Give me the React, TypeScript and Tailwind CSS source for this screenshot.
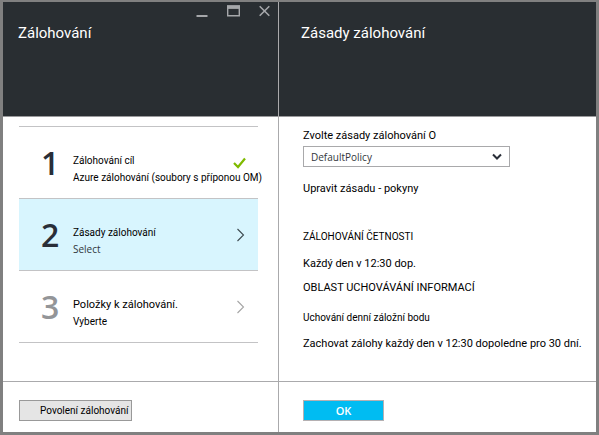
import type { ReactNode } from "react";

type StepProps = {
  number: string;
  title: string;
  detail: string;
  titleClass: string;
  detailClass: string;
  numberClass: string;
  active?: boolean;
  icon: ReactNode;
};

function Step({ number, title, detail, titleClass, detailClass, numberClass, active, icon }: StepProps) {
  return (
    <li className="border-b border-[#c3c3c5]">
      <button
        type="button"
        className={`flex h-[71px] w-full items-center pr-3 pl-[22px] text-left ${active ? "bg-[#d8f5fe]" : "bg-white"}`}
      >
        <span className={`w-8 shrink-0 font-['Open_Sans',sans-serif] text-[32px] leading-9 font-semibold ${numberClass}`}>
          {number}
        </span>
        <span className="flex w-0 flex-1 flex-col pt-[13px] whitespace-nowrap">
          <span className={`leading-[17px] ${titleClass}`}>{title}</span>
          <span className={`leading-[17px] ${detailClass}`}>{detail}</span>
        </span>
        <span className="shrink-0">{icon}</span>
      </button>
    </li>
  );
}

function Chevron({ className }: { className: string }) {
  return (
    <svg width="11" height="14" viewBox="0 0 11 14" fill="none" className={className} aria-hidden="true">
      <path d="M2.5 1L8.5 7L2.5 13" stroke="currentColor" strokeWidth="1.1" />
    </svg>
  );
}

export default function App() {
  return (
    <main className="grid min-h-screen grid-cols-[276fr_317fr] border-t-2 border-r-3 border-b-3 border-l-3 border-[#808080] bg-white font-['Roboto',sans-serif] text-black">
      <section className="flex min-w-0 flex-col border-r border-[#aaaaac]">
        <header className="flex h-[115px] flex-col border-b border-[#9a9a9c] bg-[#292e32] text-[#a5a7aa]">
          <div className="flex h-[18px] items-center justify-end gap-[19px] pr-2">
            <button type="button" aria-label="Minimalizovat">
              <svg width="12" height="12" viewBox="0 0 12 12" className="block">
                <path d="M0.5 11H11.5" stroke="currentColor" strokeWidth="2" />
              </svg>
            </button>
            <button type="button" aria-label="Maximalizovat">
              <svg width="13" height="12" viewBox="0 0 13 12" className="block" fill="none">
                <path d="M0.7 1H12.3V10.8H0.7Z" stroke="currentColor" strokeWidth="1.4" />
                <path d="M0 2.2H13" stroke="currentColor" strokeWidth="3.4" />
              </svg>
            </button>
            <button type="button" aria-label="Zavřít">
              <svg width="11" height="12" viewBox="0 0 11 12" className="block">
                <path d="M0.7 1.2L10.3 10.8M10.3 1.2L0.7 10.8" stroke="currentColor" strokeWidth="1.6" />
              </svg>
            </button>
          </div>
          <h1 className="pl-[15px] text-[15px] leading-[26px] text-white">Zálohování</h1>
        </header>

        <div className="flex flex-1 flex-col pt-[9px] pr-5 pl-4">
          <ol className="border-t border-[#c3c3c5]">
            <Step
              number="1"
              title="Zálohování cíl"
              detail="Azure zálohování (soubory s příponou OM)"
              titleClass="text-[10px]"
              detailClass="text-[10px]"
              numberClass="text-[#292e38]"
              icon={
                <svg width="13" height="12" viewBox="0 0 13 12" fill="none" className="text-[#7fba00]" aria-hidden="true">
                  <path d="M1 6L5 10L12 1.5" stroke="currentColor" strokeWidth="2.2" />
                </svg>
              }
            />
            <Step
              number="2"
              title="Zásady zálohování"
              detail="Select"
              titleClass="text-[10px]"
              detailClass="font-['Open_Sans',sans-serif] text-[10px] text-[#32373c]"
              numberClass="text-[#292e38]"
              active
              icon={<Chevron className="text-[#3d4a50]" />}
            />
            <Step
              number="3"
              title="Položky k zálohování."
              detail="Vyberte"
              titleClass="text-[11px]"
              detailClass="text-[10px]"
              numberClass="text-[#939598]"
              icon={<Chevron className="text-[#a5a5a5]" />}
            />
          </ol>
        </div>

        <footer className="h-[51px] border-t border-[#aaaaac] pt-[18px] pl-4">
          <button
            type="button"
            className="block h-[21px] w-[113px] border border-[#999999] bg-[#e5e5e5] pl-5 text-left text-[10px] leading-[19px] whitespace-nowrap"
          >
            Povolení zálohování
          </button>
        </footer>
      </section>

      <section className="flex min-w-0 flex-col">
        <header className="h-[115px] border-b border-[#9a9a9c] bg-[#292e32] pt-[18px] pl-[22px] text-white">
          <h2 className="text-[15px] leading-[26px]">Zásady zálohování</h2>
        </header>

        <div className="flex flex-1 flex-col items-start pt-[9px] pl-6 text-[11px] leading-5">
          <label htmlFor="policy">Zvolte zásady zálohování O</label>
          <div className="relative h-[21px] w-[207px]">
            <select
              id="policy"
              className="block h-full w-full appearance-none border border-[#a9a9ab] bg-white pb-0.5 pl-[7px] font-['Open_Sans',sans-serif] text-[10px] text-[#32373c]"
            >
              <option>DefaultPolicy</option>
            </select>
            <svg
              width="10"
              height="8"
              viewBox="0 0 10 8"
              fill="none"
              className="pointer-events-none absolute top-[7px] right-2 text-[#292e38]"
              aria-hidden="true"
            >
              <path d="M1 1.5L5 5.5L9 1.5" stroke="currentColor" strokeWidth="2" />
            </svg>
          </div>
          <p className="mt-3">Upravit zásadu - pokyny</p>
          <h3 className="mt-7 text-[10px]">ZÁLOHOVÁNÍ ČETNOSTI</h3>
          <p className="mt-[7px]">Každý den v 12:30 dop.</p>
          <h3 className="mt-1">OBLAST UCHOVÁVÁNÍ INFORMACÍ</h3>
          <h4 className="mt-[10px] text-[10px]">Uchování denní záložní bodu</h4>
          <p className="mt-[6px]">Zachovat zálohy každý den v 12:30 dopoledne pro 30 dní.</p>
        </div>

        <footer className="h-[51px] border-t border-[#aaaaac] pt-[18px] pl-6">
          <button
            type="button"
            className="block h-[21px] w-[81px] border border-[#b5b0b2] bg-[#00bcf2] font-['Open_Sans',sans-serif] text-[11px] leading-[19px] font-semibold text-white"
          >
            OK
          </button>
        </footer>
      </section>
    </main>
  );
}
